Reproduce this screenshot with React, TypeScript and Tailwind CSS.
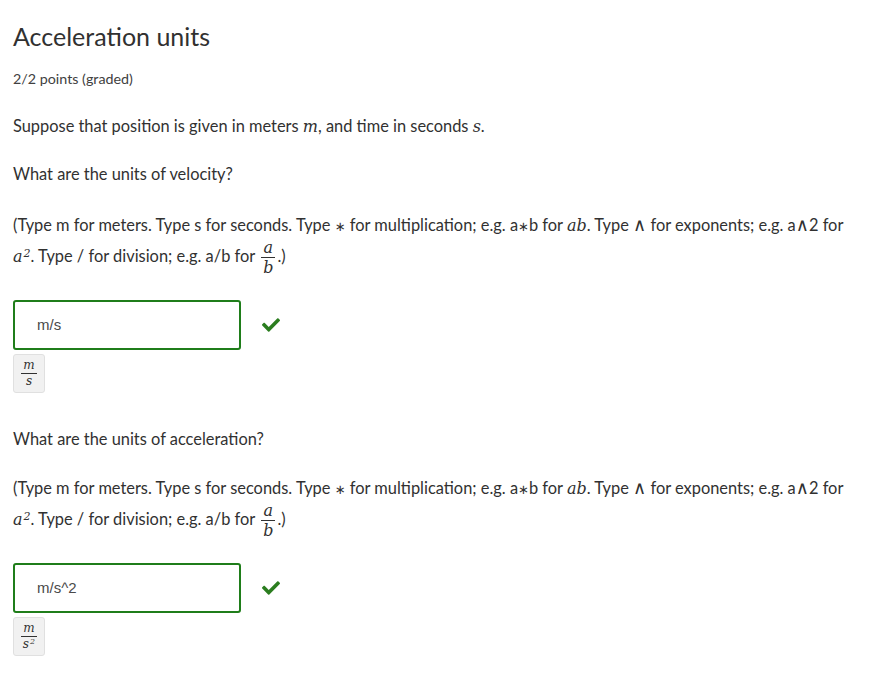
import React from "react";

const sans = "font-['Lato','Noto_Sans',sans-serif]";
const mathCls = "font-['DejaVu_Serif',serif] italic text-[16px] leading-none";

function M({ children }: { children: React.ReactNode }) {
	return <span className={mathCls}>{children}</span>;
}

function Frac({
	top,
	bottom,
	small = false,
}: {
	top: React.ReactNode;
	bottom: React.ReactNode;
	small?: boolean;
}) {
	return (
		<span
			className={`inline-flex flex-col items-center align-middle font-['DejaVu_Serif',serif] italic ${
				small
					? "text-[12px] leading-[15px]"
					: "-my-[8px] mx-[2px] text-[16px] leading-[19px]"
			}`}
		>
			<span className="px-[2px]">{top}</span>
			<span className="h-px self-stretch bg-[#313131]" />
			<span className="px-[2px]">{bottom}</span>
		</span>
	);
}

function Check() {
	return (
		<svg viewBox="0 0 512 512" className="h-[18px] w-[18px]" aria-hidden="true">
			<path
				fill="#2b7d1f"
				d="M173.898 439.404l-166.4-166.4c-9.997-9.997-9.997-26.206 0-36.204l36.203-36.204c9.997-9.998 26.207-9.998 36.204 0L192 312.69 432.095 72.596c9.997-9.997 26.207-9.997 36.204 0l36.203 36.204c9.997 9.997 9.997 26.206 0 36.204l-294.4 294.401c-9.998 9.997-26.207 9.997-36.204-.001z"
			/>
		</svg>
	);
}

const star = (
	<span className="font-['DejaVu_Sans',sans-serif] text-[13px] leading-none">∗</span>
);
const wedge = (
	<span className="font-['DejaVu_Sans',sans-serif] text-[18px] leading-none">∧</span>
);

function Hint() {
	return (
		<p className="leading-[31px]">
			(Type m for meters. Type s for seconds. Type {star} for multiplication;
			e.g. a{star}b for <M>ab</M>. Type {wedge} for exponents; e.g. a{wedge}2
			for{" "}
			<M>
				a<sup className="ml-[1px] text-[11px]">2</sup>
			</M>
			. Type / for division; e.g. a/b for <Frac top="a" bottom="b" />
			.)
		</p>
	);
}

function Answer({
	value,
	preview,
}: {
	value: string;
	preview: React.ReactNode;
}) {
	return (
		<div className="mt-[29px]">
			<div className="flex items-center gap-[21px]">
				<div className="flex h-[50px] w-[228px] items-center rounded-[3px] border-2 border-[#1f7d1a] pl-[22px] font-['Liberation_Sans',sans-serif] text-[15px] text-[#4a4a4a]">
					{value}
				</div>
				<Check />
			</div>
			<div className="mt-[4px] flex h-[39px] w-[32px] items-center justify-center rounded-[3px] border border-[#e0e0e0] bg-[#f1f1f1]">
				{preview}
			</div>
		</div>
	);
}

export default function App() {
	return (
		<div className={`${sans} bg-white px-[13px] pt-[20px] text-[16.4px] text-[#313131]`}>
			<h3 className="text-[25px] leading-[32px]">Acceleration units</h3>
			<div className="mt-[17px] text-[14.3px] leading-[20px] text-[#414141]">
				2/2 points (graded)
			</div>
			<p className="mt-[25px] leading-[24px]">
				Suppose that position is given in meters <M>m</M>, and time in seconds{" "}
				<M>s</M>.
			</p>
			<p className="mt-[24px] leading-[24px]">What are the units of velocity?</p>
			<div className="mt-[23px]">
				<Hint />
			</div>
			<Answer value="m/s" preview={<Frac small top="m" bottom="s" />} />
			<p className="mt-[34px] leading-[24px]">
				What are the units of acceleration?
			</p>
			<div className="mt-[21px]">
				<Hint />
			</div>
			<Answer
				value="m/s^2"
				preview={
					<Frac
						small
						top="m"
						bottom={
							<>
								s<sup className="ml-[1px] text-[8px]">2</sup>
							</>
						}
					/>
				}
			/>
		</div>
	);
}
